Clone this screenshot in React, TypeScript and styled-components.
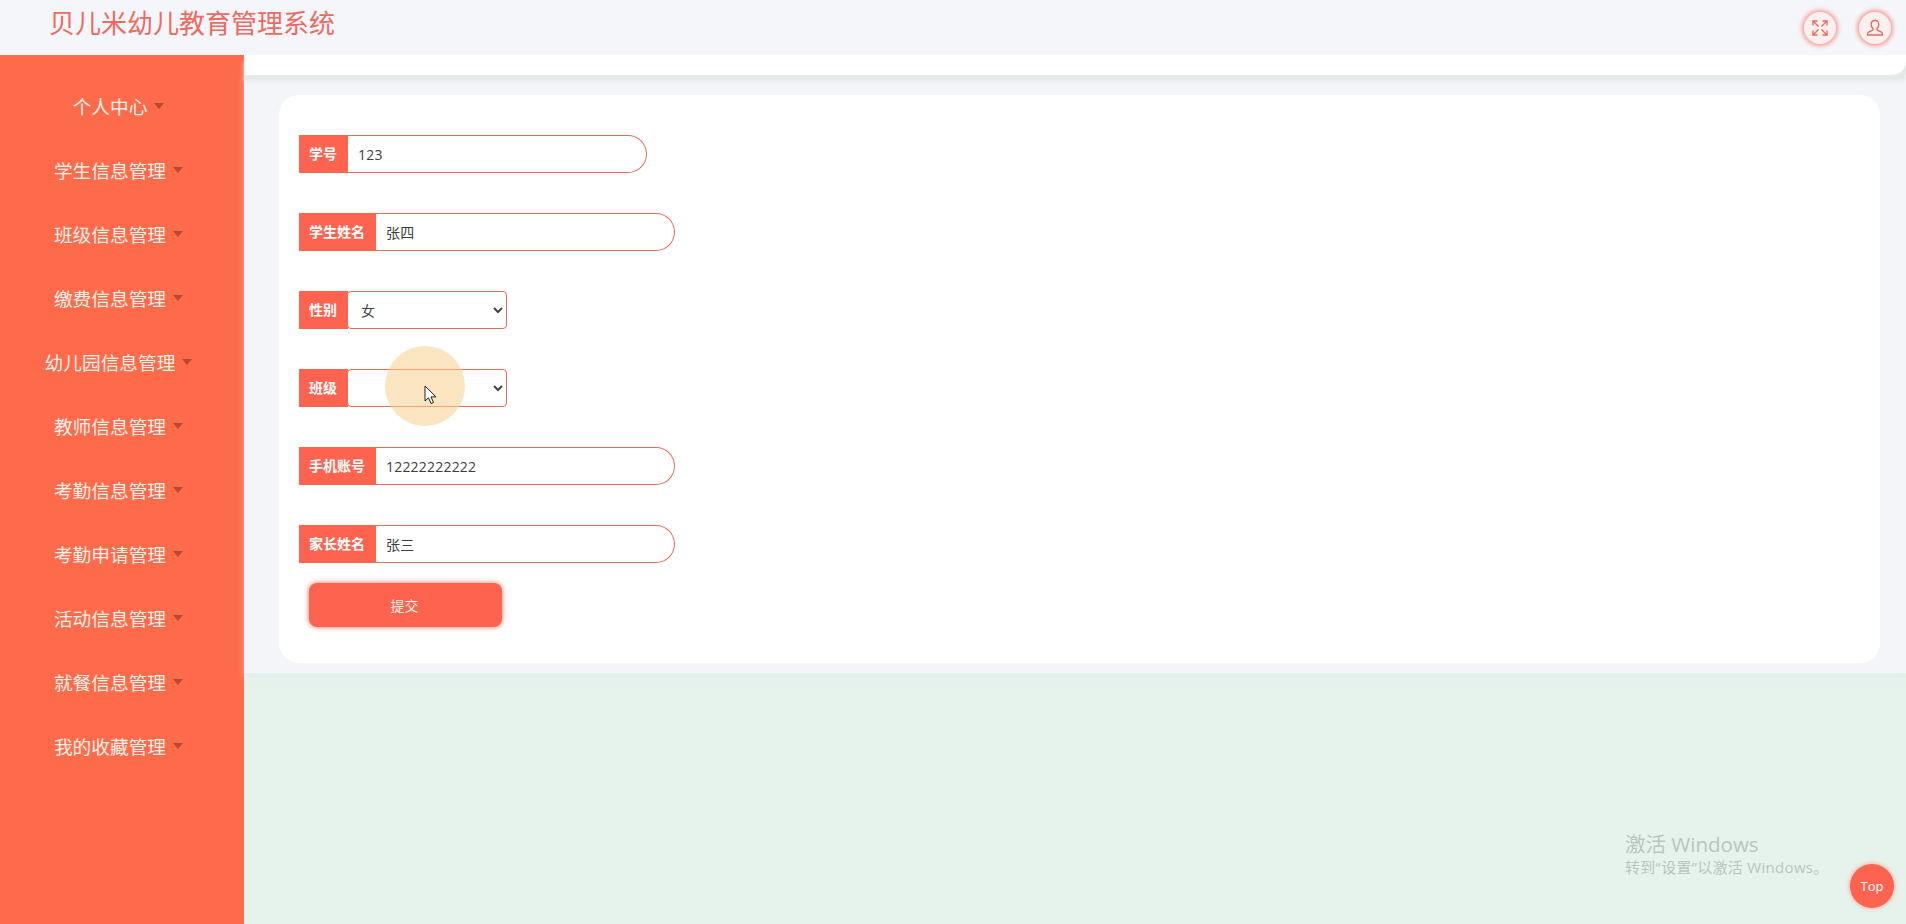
import styled, { createGlobalStyle } from "styled-components";

const GlobalStyle = createGlobalStyle`
  html, body { margin: 0; padding: 0; height: 100%; overflow: hidden; }
  body { font-family: "Open Sans", "Noto Sans CJK SC", sans-serif; }
  * { box-sizing: border-box; }
`;

const Page = styled.div`
  position: relative;
  width: 1906px; height: 924px;
  overflow: hidden;
  display: flex; flex-direction: column;
  background: #e6f3ec;
`;

const Header = styled.header`
  height: 55px; flex: none;
  display: flex; align-items: center; justify-content: space-between;
  padding: 0 15px 8px 49px;
  background: #f4f6fa;
`;

const Title = styled.h1`
  margin: 0;
  font-size: 26px; font-weight: 400; line-height: 47px;
  color: #ee6a60;
`;

const HeaderIcons = styled.div`
  display: flex; gap: 23px; padding-top: 8px;
`;

const RoundIcon = styled.button`
  width: 32px; height: 32px; padding: 0;
  display: flex; align-items: center; justify-content: center;
  border: none; border-radius: 50%;
  background: #fdf0ee;
  box-shadow: 0 0 4px 2px #f79c93;
  color: #e8675c;
`;

const Body = styled.div`
  flex: 1; min-height: 0;
  display: flex;
`;

const Sidebar = styled.nav`
  width: 244px; flex: none;
  display: flex; flex-direction: column;
  padding-top: 18px;
  background: #fe6b4a;
`;

const MenuItem = styled.a`
  height: 64px;
  display: flex; align-items: center; justify-content: center;
  padding-right: 7px;
  font-size: 18.7px; color: #fff2ea;
`;

const Caret = styled.span`
  margin: 2px 0 0 7px;
  border-top: 6px solid #b9492f;
  border-left: 5px solid transparent;
  border-right: 5px solid transparent;
`;

const Main = styled.main`
  flex: 1; min-width: 0;
`;

const TopTrack = styled.div`
  position: relative;
  height: 20px;
  background: #e4eae7;
  box-shadow: 0 6px 4px #e4eae7;
`;

const TopBar = styled.div`
  height: 100%;
  background: #fff;
  border-bottom-right-radius: 14px;
`;

const Content = styled.section`
  height: 598px;
  padding: 20px 26px 0 35px;
  background: #f3f5f9;
  box-shadow: 0 4px 6px rgba(230, 235, 240, .5);
`;

const Card = styled.form`
  height: 568px;
  display: flex; flex-direction: column; align-items: flex-start;
  padding: 40px 20px 0;
  background: #fff;
  border-radius: 20px;
`;

const Field = styled.div`
  height: 38px; margin-bottom: 40px;
  display: flex;
`;

const Label = styled.label<{ $wide?: boolean }>`
  width: ${({ $wide }) => ($wide ? 77 : 49)}px;
  display: flex; align-items: center; justify-content: center;
  padding: 0 1px 2px 0;
  font-size: 14px; font-weight: 700; color: #fff;
  background: #fe6350;
`;

const TextInput = styled.input`
  width: 299px; height: 38px;
  padding: 0 10px;
  font: 14px "Open Sans", "Noto Sans CJK SC", sans-serif;
  letter-spacing: .2px;
  color: #3d3d3d;
  background: #fff;
  border: 1px solid #e66a5a; border-left: none;
  border-radius: 0 19px 19px 0;
  outline: none;
`;

const Select = styled.select`
  width: 160px; height: 38px;
  margin-left: -1px;
  padding: 0 9px;
  font: 14px "Open Sans", "Noto Sans CJK SC", sans-serif;
  color: #444;
  background: #fff;
  border: 1px solid #e66a5a;
  border-radius: 4px;
  outline: none;
`;

const Submit = styled.button`
  width: 193px; height: 44px;
  margin: -20px 0 0 10px;
  padding: 0 2px 0 0;
  font: 14px "Open Sans", "Noto Sans CJK SC", sans-serif;
  color: #fff2ea;
  background: #fe6350;
  border: none; border-radius: 8px;
  box-shadow: 0 0 5px 1px #fb9e92;
`;

const Highlight = styled.div`
  position: absolute; left: 385px; top: 346px;
  width: 80px; height: 80px;
  border-radius: 50%;
  background: rgba(248, 208, 140, .55);
  pointer-events: none;
`;

const Pointer = styled.svg`
  position: absolute; left: 424px; top: 385px;
`;

const Watermark = styled.div`
  position: absolute; left: 1625px; top: 831px;
  color: #b9c5c0;
`;

const WatermarkTitle = styled.div`
  font-size: 20.5px; line-height: 26px;
`;

const WatermarkText = styled.div`
  font-size: 15px; line-height: 20px; letter-spacing: .3px;
`;

const TopButton = styled.button`
  position: absolute; left: 1850px; top: 864px;
  width: 44px; height: 44px; padding: 0;
  border: none; border-radius: 50%;
  font: 500 13px "Open Sans", sans-serif;
  color: #fff;
  background: #fe6350;
  box-shadow: 0 0 4px 1px #f7b5aa;
`;

const menus = [
  "个人中心", "学生信息管理", "班级信息管理", "缴费信息管理", "幼儿园信息管理", "教师信息管理",
  "考勤信息管理", "考勤申请管理", "活动信息管理", "就餐信息管理", "我的收藏管理",
];

export default function App() {
  return (
    <Page>
      <GlobalStyle />
      <Header>
        <Title>贝儿米幼儿教育管理系统</Title>
        <HeaderIcons>
          <RoundIcon type="button">
            <svg width="18" height="18" viewBox="0 0 18 18" fill="none" stroke="currentColor" strokeWidth="1.3">
              <path d="M2 2l5.500 5.500M16 2l-5.500 5.500M2 16l5.500-5.500M16 16l-5.500-5.500" />
              <path d="M2 6.500V2h4.500M11.500 2H16v4.500M2 11.500V16h4.500M16 11.500V16h-4.500" />
            </svg>
          </RoundIcon>
          <RoundIcon type="button">
            <svg width="18" height="18" viewBox="0 0 18 18" fill="none" stroke="currentColor" strokeWidth="1.3">
              <path d="M9 1.500c-2.400 0-3.800 1.700-3.800 4 0 1.800.8 3 1.700 4 .4.500.2 1.500-.6 1.900L2.500 13.200c-.8.400-1 1.200-1 2.800h15c0-1.600-.2-2.400-1-2.800l-3.800-1.800c-.8-.4-1-1.400-.6-1.900.9-1 1.700-2.200 1.700-4 0-2.300-1.400-4-3.800-4z" />
            </svg>
          </RoundIcon>
        </HeaderIcons>
      </Header>
      <Body>
        <Sidebar>
          {menus.map((m) => (
            <MenuItem key={m}>
              {m}
              <Caret />
            </MenuItem>
          ))}
        </Sidebar>
        <Main>
          <TopTrack>
            <TopBar />
          </TopTrack>
          <Content>
            <Card>
              <Field>
                <Label>学号</Label>
                <TextInput defaultValue="123" />
              </Field>
              <Field>
                <Label $wide>学生姓名</Label>
                <TextInput defaultValue="张四" />
              </Field>
              <Field>
                <Label>性别</Label>
                <Select defaultValue="女">
                  <option>男</option>
                  <option>女</option>
                </Select>
              </Field>
              <Field>
                <Label>班级</Label>
                <Select defaultValue="">
                  <option value=""></option>
                </Select>
              </Field>
              <Field>
                <Label $wide>手机账号</Label>
                <TextInput defaultValue="12222222222" />
              </Field>
              <Field>
                <Label $wide>家长姓名</Label>
                <TextInput defaultValue="张三" />
              </Field>
              <Submit type="button">提交</Submit>
            </Card>
          </Content>
        </Main>
      </Body>
      <Highlight />
      <Pointer width="14" height="20" viewBox="0 0 14 20">
        <path d="M1 1v15l3.500-3.200 2.500 5.700 2.500-1.100-2.500-5.500h5z" fill="#fff" stroke="#222" strokeWidth="1" />
      </Pointer>
      <Watermark>
        <WatermarkTitle>激活 Windows</WatermarkTitle>
        <WatermarkText>转到“设置”以激活 Windows。</WatermarkText>
      </Watermark>
      <TopButton type="button">Top</TopButton>
    </Page>
  );
}
